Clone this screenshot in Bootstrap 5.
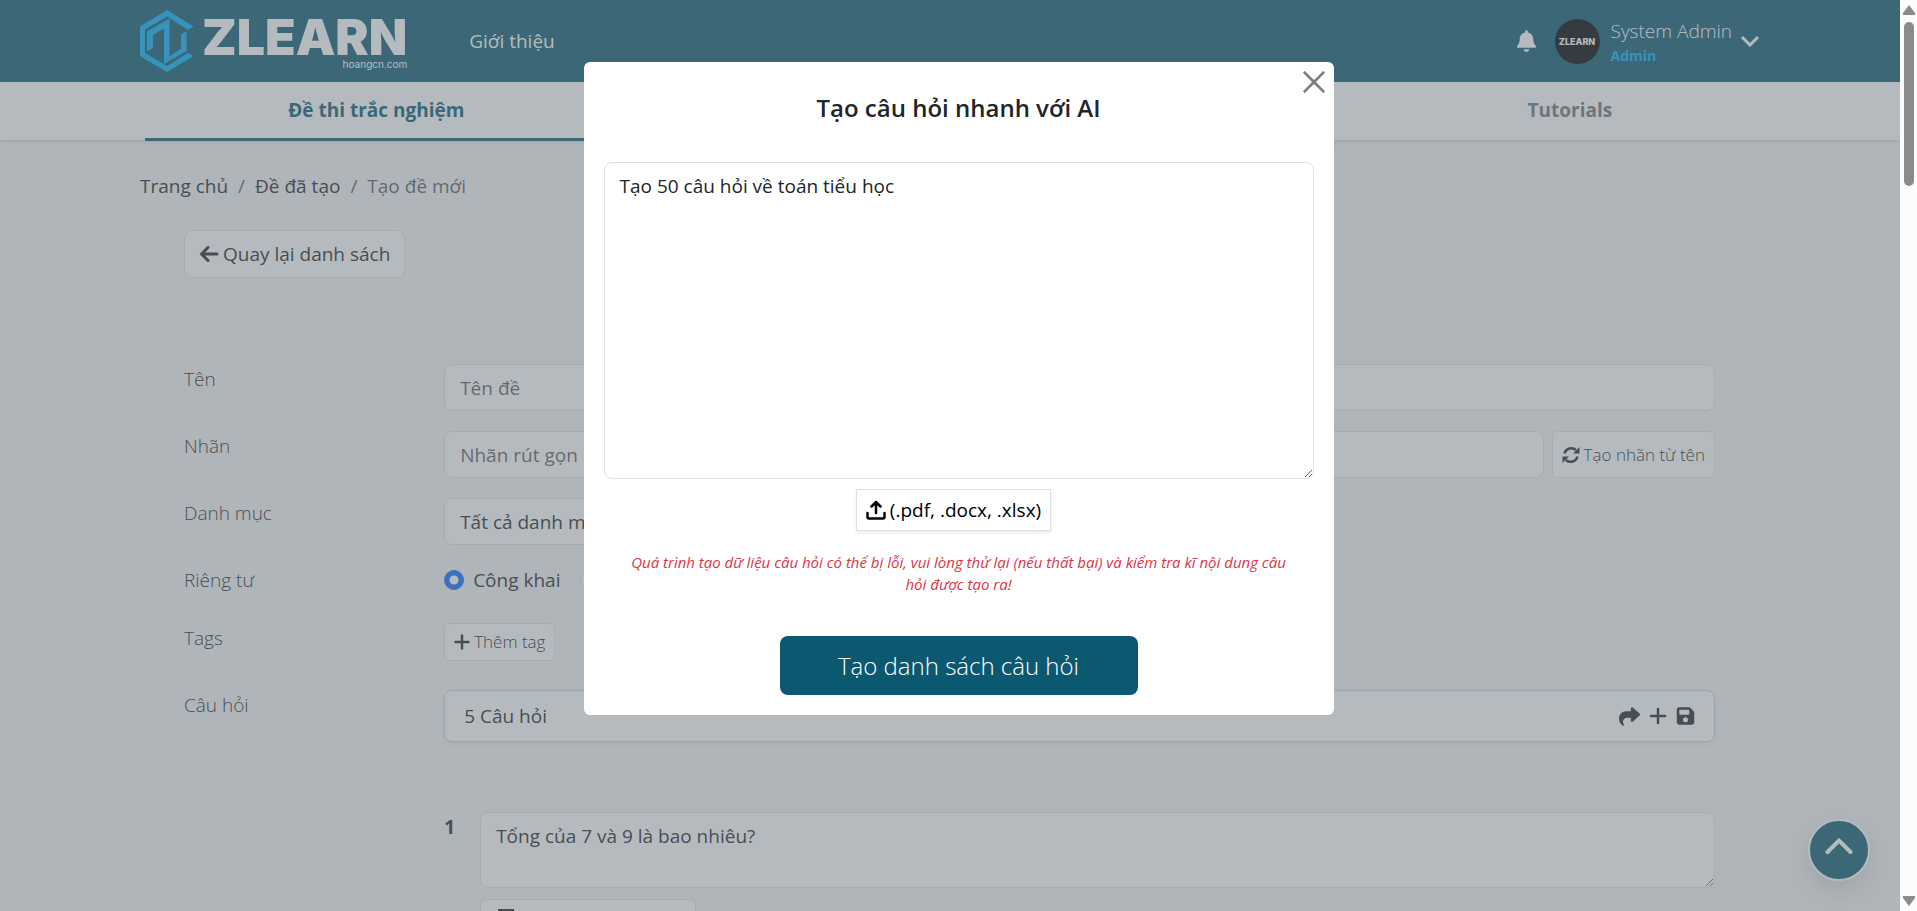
<!DOCTYPE html>
<html lang="vi">
<head>
<meta charset="utf-8">
<meta name="viewport" content="width=device-width, initial-scale=1">
<title>ZLEARN - Tạo đề mới</title>
<link rel="stylesheet" href="https://cdn.jsdelivr.net/npm/bootstrap@5.3.0/dist/css/bootstrap.min.css">
<style>
  :root { --brand: #0a5970; --sky: #04b0fb; --fs: 19px; }
  body { font-family: "Open Sans", "Noto Sans", sans-serif; font-size: var(--fs); line-height: 30px; background: #f4f5f6; }
  .screen { overflow: hidden; }
  .page-view { min-width: 0; }
  .wide { max-width: 1650px; padding: 0 15px; margin: 0 auto; width: 100%; }
  .thin { font-weight: 300; }

  .topbar { background: var(--brand); height: 82px; color: #fff; }
  .logo-mark { fill: var(--sky); }
  .brand-word { font: 900 50px/42px Inter, sans-serif; color: #fff; }
  .brand-site { font: 400 10px/12px Inter, sans-serif; color: #fff; }
  .menu-link { margin-left: 62px; }
  .bell { margin-right: 19px; }
  .avatar { width: 45px; height: 45px; background: #000; font: 800 9px/45px Inter, sans-serif; }
  .user-block { margin-left: 11px; }
  .user-role { font-size: 14px; line-height: 20px; color: var(--sky); }
  .user-name { line-height: 29px; }

  .tabs { height: 58px; box-shadow: 0 2px 5px rgba(0,0,0,.12); }
  .tab-grid { display: grid; grid-template-columns: 5fr 8.4fr 4fr; padding: 0 5px; height: 58px; }
  .tab-grid a { text-align: center; font-weight: 700; line-height: 56px; color: #6c757d; text-decoration: none; }
  .tab-grid a.current { color: var(--brand); border-bottom: 3px solid var(--brand); }
  .tab-grid a.last { grid-column: 3; }

  .breadcrumb { margin: 31px 0 29px; --bs-breadcrumb-item-padding-x: 10px; font-size: var(--fs); }
  .breadcrumb a { color: #212529; text-decoration: none; }
  .editor { padding: 0 45px 0 44px; }
  .editor .row { --bs-gutter-x: 30px; margin-bottom: 20px; }
  .btn-plain { background: #fff; border: 1px solid #dee2e6; color: #212529; font-size: var(--fs); line-height: 30px; padding: 8px 14px; border-radius: 8px; }
  .btn-plain:hover { background: #f8f9fa; }
  .btn-plain svg, .tool svg { display: block; flex: none; }
  .btn-tight { padding: 3px 9px; font-size: 17px; border-radius: 5px; }
  .form-control, .form-select { font-size: var(--fs); line-height: 29px; padding: 9px 15px 7px; border-radius: 8px; border-color: #dee2e6; }
  .form-check-input { width: 20px; height: 20px; margin: 5px 9px 0 0; }
  .choice { margin-right: 20px; }
  .back-row { margin-bottom: 86px; }
  .count-row { padding-top: 29px; }
  .count-bar { background: #fff; border: 1px solid #ced4da; border-radius: 8px; padding: 10px 19px; box-shadow: 0 2px 4px rgba(0,0,0,.08); }
  .tool { border: 0; background: none; padding: 0; color: #212529; }
  .question { margin-top: 70px; }
  .q-no { width: 36px; font-weight: 700; }
  .q-kind { width: 216px; height: 38px; margin-top: 11px; }

  .to-top { width: 62px; height: 62px; right: 30px; bottom: 30px; background: var(--brand); border: 2px solid #fff; box-shadow: 0 10px 30px rgba(0,0,0,.15); }

  .veil { inset: 0; background: #6c757d; opacity: .5; }
  .dialog-layer { inset: 0; }
  .dialog { width: 750px; max-width: 96%; margin: 62px auto 0; padding: 20px; border-radius: 6px; background: #fff; position: relative; }
  .dialog .btn-close { position: absolute; top: 8px; right: 8px; width: 24px; height: 24px; padding: 0; background-size: 22px; }
  .dialog h1 { font-size: 24px; line-height: 30px; font-weight: 600; margin: 11px 0 39px; }
  .prompt-box { height: 317px; }
  .upload { border: 1px solid #dee2e6; background: #fff; color: #000; height: 42px; padding: 0 9px; margin: 10px 10px 0 0; box-shadow: 0 2px 4px rgba(0,0,0,.08); }
  .warn { font-size: 15px; line-height: 22px; font-style: italic; color: #dc3545; margin: 20px 0 41px; padding: 0 20px; }
  .go { width: 358px; height: 59px; border: 0; border-radius: 8px; background: var(--brand); color: #fff; font-size: 24px; font-weight: 300; }

  .scroll-rail { width: 17px; background: #fcfcfc; }
  .scroll-thumb { width: 10px; height: 164px; border-radius: 5px; background: #8b8b8b; margin-top: 7px; }
</style>
</head>
<body>
<div class="screen position-relative d-flex vh-100">
  <div class="page-view position-relative flex-fill overflow-hidden">
    <header class="topbar">
      <div class="wide h-100 d-flex align-items-center">
        <a href="#" class="d-flex align-items-center text-decoration-none" aria-label="ZLEARN">
          <svg class="logo-mark" width="54" height="62" viewBox="0 0 54 62">
            <path d="M27 0 53.500 16.500 48 20 27 6.500 5 19.500V43L27 56 48 43 53.500 46 27 62 0 46V16.500Z"/>
            <path d="M7 41.500V21.500L29.500 8.500V46.500L41 38.500V24.500L46.500 21.500V41L24 54V18.500L13 25V38Z"/>
          </svg>
          <span class="d-flex flex-column align-items-end ms-2">
            <span class="brand-word mt-1">ZLEARN</span>
            <span class="brand-site">hoangcn.com</span>
          </span>
        </a>
        <a href="#" class="menu-link text-white text-decoration-none">Giới thiệu</a>
        <div class="ms-auto d-flex align-items-center">
          <svg class="bell" width="19" height="22" viewBox="0 0 448 512" fill="#fff"><path d="M224 512c35.32 0 63.97-28.65 63.97-64H160.03c0 35.35 28.65 64 63.97 64zm215.39-149.71c-19.32-20.76-55.47-51.99-55.47-154.29 0-77.7-54.48-139.9-127.94-155.16V32c0-17.67-14.32-32-31.98-32s-31.98 14.33-31.98 32v20.84C118.56 68.1 64.08 130.3 64.08 208c0 102.3-36.15 133.53-55.47 154.29-6 6.45-8.66 14.16-8.61 21.71.11 16.4 12.98 32 32.1 32h383.8c19.12 0 32-15.6 32.1-32 .05-7.55-2.61-15.27-8.61-21.71z"/></svg>
          <span class="avatar rounded-circle text-center text-white">ZLEARN</span>
          <div class="user-block d-flex flex-column">
            <span class="user-name thin">System Admin</span>
            <strong class="user-role">Admin</strong>
          </div>
          <svg class="ms-2" width="20" height="12" viewBox="0 0 20 12" fill="none" stroke="#fff" stroke-width="3"><path d="m2 2 8 8 8-8"/></svg>
        </div>
      </div>
    </header>

    <nav class="tabs bg-white">
      <div class="wide">
        <div class="tab-grid">
          <a href="#" class="current">Đề thi trắc nghiệm</a>
          <a href="#" class="last">Tutorials</a>
        </div>
      </div>
    </nav>

    <main class="wide">
      <ol class="breadcrumb">
        <li class="breadcrumb-item"><a href="#">Trang chủ</a></li>
        <li class="breadcrumb-item"><a href="#">Đề đã tạo</a></li>
        <li class="breadcrumb-item active">Tạo đề mới</li>
      </ol>

      <div class="editor">
        <div class="back-row">
          <button type="button" class="btn btn-plain d-inline-flex align-items-center gap-1">
            <svg width="20" height="18" viewBox="0 0 20 18" fill="none" stroke="currentColor" stroke-width="3" stroke-linecap="round" stroke-linejoin="round"><path d="M18 9H3M9 2.500 2.500 9 9 15.500"/></svg>
            Quay lại danh sách
          </button>
        </div>

        <div class="row">
          <label for="name" class="col-2 thin">Tên</label>
          <div class="col-10"><input id="name" class="form-control" placeholder="Tên đề"></div>
        </div>
        <div class="row">
          <label for="slug" class="col-2 thin">Nhãn</label>
          <div class="col-10 d-flex">
            <input id="slug" class="form-control me-2" placeholder="Nhãn rút gọn">
            <button type="button" class="btn btn-plain btn-tight thin d-flex align-items-center gap-1 text-nowrap">
              <svg width="18" height="18" viewBox="0 0 18 18" fill="currentColor"><path d="M2.500 7.500A7 7 0 0 1 14 4M15.500 10.500A7 7 0 0 1 4 14" fill="none" stroke="currentColor" stroke-width="2.500"/><path d="M17.500 1V7.500H11ZM.5 17V10.500H7Z"/></svg>
              Tạo nhãn từ tên
            </button>
          </div>
        </div>
        <div class="row">
          <label for="category" class="col-2 thin">Danh mục</label>
          <div class="col-5"><select id="category" class="form-select"><option>Tất cả danh mục</option></select></div>
        </div>
        <div class="row">
          <span class="col-2 thin">Riêng tư</span>
          <div class="col-10 d-flex pb-2">
            <input class="form-check-input" type="radio" name="privacy" id="public" checked>
            <label for="public" class="choice">Công khai</label>
            <input class="form-check-input" type="radio" name="privacy" aria-label="Riêng tư">
          </div>
        </div>
        <div class="row mb-0">
          <span class="col-2 thin">Tags</span>
          <div class="col-10">
            <button type="button" class="btn btn-plain btn-tight thin d-inline-flex align-items-center gap-1">
              <svg width="16" height="16" viewBox="0 0 16 16" stroke="currentColor" stroke-width="2.500" stroke-linecap="round"><path d="M8 1.500v13M1.500 8h13"/></svg>
              Thêm tag
            </button>
          </div>
        </div>
        <div class="row count-row">
          <span class="col-2 thin">Câu hỏi</span>
          <div class="col-10">
            <div class="count-bar d-flex align-items-center">
              <span class="me-auto">5 Câu hỏi</span>
              <button type="button" class="tool" aria-label="Chia sẻ"><svg width="21" height="21" viewBox="0 0 512 512" fill="currentColor"><path d="M307 34.800c-11.500 5.100-19 16.600-19 29.200v64H176C78.800 128 0 206.800 0 304C0 417.300 81.500 467.900 100.200 478.100c2.500 1.400 5.300 1.900 8.100 1.900c10.900 0 19.700-8.900 19.700-19.700c0-7.500-4.300-14.400-9.800-19.500C108.800 431.900 96 414.400 96 384c0-53 43-96 96-96h96v64c0 12.600 7.400 24.100 19 29.200s25 3 34.400-5.400l160-144c6.700-6.100 10.600-14.700 10.600-23.800s-3.800-17.700-10.600-23.800l-160-144c-9.400-8.500-22.900-10.600-34.400-5.400z"/></svg></button>
              <button type="button" class="tool ps-2 pe-1 me-1" aria-label="Thêm"><svg width="20" height="20" viewBox="0 0 20 20" stroke="currentColor" stroke-width="2.500" stroke-linecap="round"><path d="M10 3v14M3 10h14"/></svg></button>
              <button type="button" class="tool" aria-label="Lưu"><svg width="19" height="20" viewBox="0 0 448 512" fill="currentColor"><path fill-rule="evenodd" d="M64 32C28.700 32 0 60.700 0 96V416c0 35.300 28.700 64 64 64H384c35.300 0 64-28.700 64-64V173.300c0-17-6.700-33.300-18.700-45.300L352 50.700C340 38.700 323.700 32 306.700 32H64zm0 96c0-17.700 14.300-32 32-32H288c17.700 0 32 14.300 32 32v64c0 17.700-14.300 32-32 32H96c-17.700 0-32-14.300-32-32V128zM224 288a64 64 0 1 1 0 128 64 64 0 1 1 0-128z"/></svg></button>
            </div>
            <div class="question d-flex">
              <label for="q1" class="q-no">1</label>
              <div class="flex-fill">
                <textarea id="q1" class="form-control" rows="2">Tổng của 7 và 9 là bao nhiêu?</textarea>
                <button type="button" class="btn btn-plain btn-tight q-kind d-flex align-items-center" aria-label="Thêm đáp án">
                  <svg class="ms-2" width="16" height="18" viewBox="0 0 16 18" fill="none" stroke="currentColor" stroke-width="2"><path d="M1 1h14v16H1z"/></svg>
                </button>
              </div>
            </div>
          </div>
        </div>
      </div>
    </main>

    <button type="button" class="to-top position-absolute rounded-circle p-0" aria-label="Lên đầu trang">
      <svg class="d-block mx-auto mb-2" width="28" height="18" viewBox="0 0 28 18" fill="none" stroke="#fff" stroke-width="4" stroke-linecap="round"><path d="M2.500 15 14 3.500 25.500 15"/></svg>
    </button>

    <div class="veil position-absolute"></div>
  </div>

  <div class="scroll-rail d-flex flex-column align-items-center flex-shrink-0" aria-hidden="true">
    <svg class="mt-1" width="12" height="11" viewBox="0 0 12 11" fill="#8b8b8b"><path d="M6 1 12 9v2H0V9Z"/></svg>
    <div class="scroll-thumb"></div>
    <svg class="mt-auto mb-1" width="12" height="11" viewBox="0 0 12 11" fill="#8b8b8b"><path d="M6 10 12 2V0H0v2Z"/></svg>
  </div>

  <div class="dialog-layer position-absolute" role="dialog" aria-labelledby="dialog-title">
    <div class="dialog text-center">
      <button type="button" class="btn-close" aria-label="Đóng"></button>
      <h1 id="dialog-title">Tạo câu hỏi nhanh với AI</h1>
      <textarea class="form-control prompt-box" aria-labelledby="dialog-title">Tạo 50 câu hỏi về toán tiểu học</textarea>
      <button type="button" class="upload d-inline-flex align-items-center gap-1">
        <svg width="20" height="20" viewBox="0 0 20 20" fill="none" stroke="currentColor" stroke-width="2.500" stroke-linecap="round" stroke-linejoin="round"><path d="M10 13V2.500M5.500 6.500 10 2l4.500 4.500M1.500 13v4q0 1.500 1.500 1.500h14q1.500 0 1.500-1.500v-4"/></svg>
        (.pdf, .docx, .xlsx)
      </button>
      <p class="warn">Quá trình tạo dữ liệu câu hỏi có thể bị lỗi, vui lòng thử lại (nếu thất bại) và kiểm tra kĩ nội dung câu hỏi được tạo ra!</p>
      <button type="button" class="go">Tạo danh sách câu hỏi</button>
    </div>
  </div>
</div>
<script src="https://cdn.jsdelivr.net/npm/bootstrap@5.3.0/dist/js/bootstrap.bundle.min.js"></script>
</body>
</html>
